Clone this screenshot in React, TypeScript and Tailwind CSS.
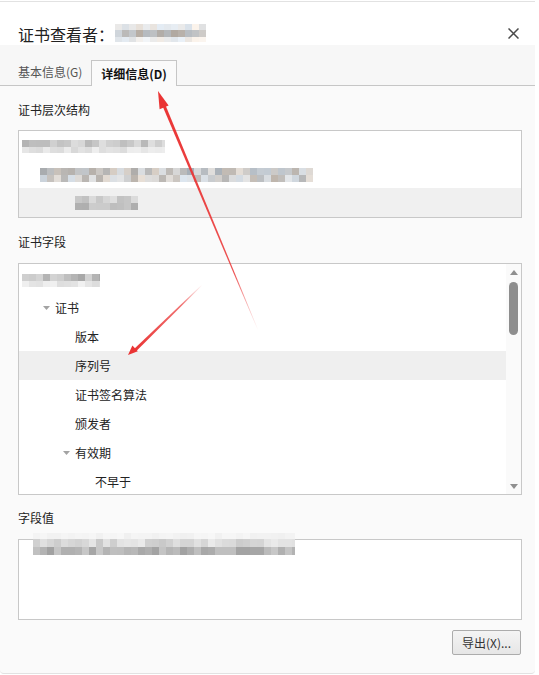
import React from 'react'

const FONT = { fontFamily: '"Noto Sans CJK SC", "Noto Sans", "Liberation Sans", sans-serif' }

// blurred (pixelated) placeholder for hidden certificate text
function Pix({ width, rows, seed, tint = false }: { width: number, rows: [number, number, number][], seed: number, tint?: boolean }) {
  let s = seed
  const rnd = () => {
    s = (s * 9301 + 49297) % 233280
    return s / 233280
  }
  const cols = Math.ceil(width / 7)
  return (
    <div className="flex flex-col" style={{ width }}>
      {rows.map(([h, lo, hi], ri) => (
        <div key={ri} className="flex overflow-hidden" style={{ height: h }}>
          {Array.from({ length: cols }).map((_, ci) => {
            const g = Math.round(lo + rnd() * (hi - lo))
            const t = tint ? Math.round((rnd() - 0.5) * 18) : 0
            return <div key={ci} className="shrink-0 w-[7px]" style={{ backgroundColor: `rgb(${g + t},${g},${g - t})` }} />
          })}
        </div>
      ))}
    </div>
  )
}

function Tri({ down = true }: { down?: boolean }) {
  return (
    <svg width="8" height="5" viewBox="0 0 8 5" className="shrink-0">
      {down ? <path d="M0 0h8L4 5z" fill="#8f8f8f" /> : <path d="M0 5h8L4 0z" fill="#8f8f8f" />}
    </svg>
  )
}

function TreeTri() {
  return (
    <svg width="7" height="4" viewBox="0 0 7 4" className="shrink-0">
      <path d="M0 0h7L3.5 4z" fill="#a3a3a3" />
    </svg>
  )
}

export default function App() {
  const fields = [
    { label: '版本', pl: 'pl-[56px]' },
    { label: '序列号', pl: 'pl-[56px]', sel: true },
    { label: '证书签名算法', pl: 'pl-[56px]' },
    { label: '颁发者', pl: 'pl-[56px]' },
  ]

  return (
    <div className="w-[539px] h-[675px] bg-white pt-px relative overflow-hidden text-[#222]" style={FONT}>
      <div className="w-[535px] h-[673px] flex flex-col border-t border-b border-[#e2e2e2] rounded-b-[4px] bg-[#fafafa]">

        {/* header */}
        <div className="h-[43px] bg-white flex items-end justify-between pl-[18px] pr-[16px]">
          <div className="flex items-center">
            <span className="text-[16px] leading-[22px]">证书查看者：</span>
            <div className="ml-[1px] mt-[-3px]">
              <Pix width={91} seed={7} tint rows={[[6, 222, 244], [7, 165, 215], [5, 226, 246]]} />
            </div>
          </div>
          <svg width="11" height="11" viewBox="0 0 11 11" className="mb-[6px]">
            <path d="M0.5 0.5l10 10M10.5 0.5l-10 10" stroke="#4a4a4a" strokeWidth="1.5" />
          </svg>
        </div>

        {/* tabs */}
        <div className="h-[41px] bg-[#f7f7f7] border-b border-[#c6c6c6] flex items-end pl-[10px]">
          <div className="w-[81px] h-[26px] flex items-center pl-[8px] text-[12px] text-[#555]">基本信息(G)</div>
          <div className="w-[86px] h-[26px] -mb-px flex items-center justify-center border border-b-0 border-[#c6c6c6] bg-[#fafafa] text-[12px] font-bold text-[#111]">详细信息(D)</div>
        </div>

        {/* content */}
        <div className="flex flex-col pl-[18px] pr-[13px] pt-[14px] text-[12px]">
          <div className="leading-[20px]">证书层次结构</div>
          <div className="mt-[10px] h-[88px] border border-[#c8c8c8] bg-white flex flex-col overflow-hidden">
            <div className="h-[29px] flex items-center pl-[3px] pt-[2px]">
              <Pix width={143} seed={21} rows={[[7, 178, 222], [6, 215, 240]]} />
            </div>
            <div className="h-[29px] flex items-center pl-[21px] pt-[2px]">
              <Pix width={273} seed={45} tint rows={[[7, 172, 225], [7, 180, 232]]} />
            </div>
            <div className="h-[29px] flex items-center pl-[56px] bg-[#f0f0f0] pt-[1px]">
              <Pix width={63} seed={77} rows={[[7, 190, 225], [7, 170, 210]]} />
            </div>
          </div>

          <div className="mt-[14px] leading-[20px]">证书字段</div>
          <div className="mt-[11px] h-[232px] border border-[#c8c8c8] bg-white flex overflow-hidden">
            <div className="flex-1 flex flex-col">
              <div className="h-[29px] shrink-0 flex items-center pl-[3px] pt-[3px]">
                <Pix width={78} seed={91} rows={[[7, 165, 215], [6, 220, 242]]} />
              </div>
              <div className="h-[29px] shrink-0 flex items-center pl-[24px] gap-[5px]">
                <TreeTri />
                <span>证书</span>
              </div>
              {fields.map((f) => (
                <div key={f.label} className={`h-[29px] shrink-0 flex items-center ${f.pl} ${f.sel ? 'bg-[#efefef]' : ''}`}>
                  {f.label}
                </div>
              ))}
              <div className="h-[29px] shrink-0 flex items-center pl-[44px] gap-[5px]">
                <TreeTri />
                <span>有效期</span>
              </div>
              <div className="h-[29px] shrink-0 flex items-center pl-[76px]">不早于</div>
            </div>
            <div className="w-[15px] bg-[#fafafa] flex flex-col items-center pt-[6px] pb-[5px]">
              <Tri down={false} />
              <div className="mt-[7px] w-[9px] h-[53px] rounded-full bg-[#8e8e8e]" />
              <div className="flex-1" />
              <Tri />
            </div>
          </div>

          <div className="mt-[13px] leading-[20px]">字段值</div>
          <div className="mt-[11px] h-[81px] border border-[#c8c8c8] bg-white">
            <div className="ml-[14px] -mt-[7px]">
              <Pix width={262} seed={133} rows={[[6, 240, 247], [8, 200, 235], [8, 158, 200]]} />
            </div>
          </div>

          <div className="mt-[10px] flex justify-end">
            <button className="mr-px w-[69px] h-[25px] border border-[#acacac] rounded-[2px] bg-gradient-to-b from-[#f4f4f4] to-[#e6e6e6] text-[12px] text-[#333] flex items-center justify-center">
              导出(X)...
            </button>
          </div>
        </div>
      </div>

      {/* red annotation arrows */}
      <svg className="absolute inset-0 pointer-events-none" width="539" height="675">
        <defs>
          <linearGradient id="a1" gradientUnits="userSpaceOnUse" x1="162" y1="102" x2="258" y2="330">
            <stop offset="0" stopColor="#ea3434" stopOpacity="1" />
            <stop offset="0.75" stopColor="#ea3434" stopOpacity="0.85" />
            <stop offset="1" stopColor="#ea3434" stopOpacity="0" />
          </linearGradient>
          <linearGradient id="a2" gradientUnits="userSpaceOnUse" x1="133" y1="350" x2="202" y2="285">
            <stop offset="0" stopColor="#ea3434" stopOpacity="1" />
            <stop offset="0.7" stopColor="#ea3434" stopOpacity="0.7" />
            <stop offset="1" stopColor="#ea3434" stopOpacity="0" />
          </linearGradient>
        </defs>
        <polygon points="162.4,105.8 165.2,104.6 258.3,330 257.7,330" fill="url(#a1)" />
        <polygon points="158,91 168.6,105.4 159.6,109.2" fill="#ea3434" />
        <polygon points="133.8,349.2 135.9,351.4 202.3,285.3 201.7,284.7" fill="url(#a2)" />
        <polygon points="128,355 137.8,351.3 132.4,345.6" fill="#ea3434" />
      </svg>
    </div>
  )
}
